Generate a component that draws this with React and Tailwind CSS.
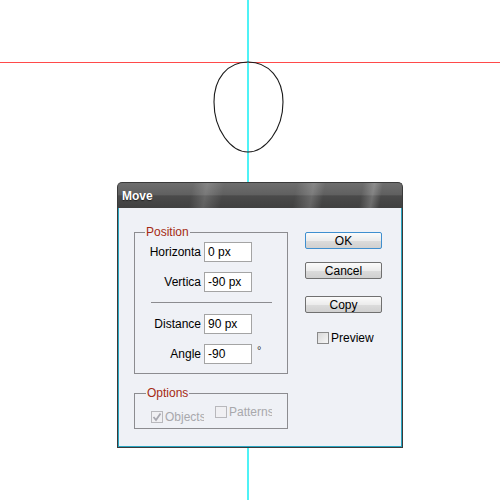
import React from 'react';

const font = "font-['Liberation_Sans',Arial,sans-serif]";

const Field = ({ label, value, unit }) => (
    <div className="flex items-center h-[20px]">
        <span className="w-[66px] text-right text-[12px] text-black leading-none">{label}</span>
        <div className="ml-[3px] w-[48px] h-[20px] border border-[#a4a4a4] bg-white flex items-center pl-[3px] text-[12px] text-black leading-none">
            {value}
        </div>
        {unit && <span className="ml-[5px] -mt-[8px] text-[11px] text-[#333]">{unit}</span>}
    </div>
);

const Button = ({ children, active }) => (
    <div
        className={`w-[77px] h-[17px] rounded-[2px] border flex items-center justify-center text-[12px] text-black leading-none bg-[linear-gradient(180deg,#fbfbfb_0%,#ececec_50%,#dcdcdc_51%,#d0d0d0_100%)] ${
            active ? 'border-[#3f8fcf]' : 'border-[#707070]'
        }`}
    >
        {children}
    </div>
);

const Check = ({ checked, disabled, label, width }) => (
    <div className={`flex items-center overflow-hidden whitespace-nowrap ${width}`}>
        <div
            className={`w-[12px] h-[12px] shrink-0 border flex items-center justify-center ${
                disabled ? 'border-[#b8b8bc] bg-[#f0f0f3]' : 'border-[#8a8a8a] bg-[linear-gradient(135deg,#d8d8d8,#f6f6f6)]'
            }`}
        >
            {checked && (
                <svg width="10" height="10" viewBox="0 0 10 10">
                    <polyline points="1.5,5 4,8 8.5,1.5" fill="none" stroke="#a8a8b0" strokeWidth="1.8" />
                </svg>
            )}
        </div>
        <span className={`ml-[2px] text-[12px] leading-none ${disabled ? 'text-[#a8a8ac]' : 'text-black'}`}>{label}</span>
    </div>
);

const App = () => {
    return (
        <div className={`relative w-[500px] h-[500px] bg-white overflow-hidden ${font}`}>
            {/* guides */}
            <div className="absolute left-0 top-[62px] w-[500px] h-[1px] bg-[#ff4a4a]" />
            <div className="absolute left-[247px] top-0 w-[2px] h-[500px] bg-[#4ff2f6]" />

            {/* egg path */}
            <svg className="absolute left-0 top-0" width="500" height="500">
                <path
                    d="M248,62 C269,62 283,79 283,102 C283,130 265,152 248,152 C231,152 214,130 214,102 C214,79 227,62 248,62 Z"
                    fill="none"
                    stroke="#1a1a1a"
                    strokeWidth="1.1"
                />
            </svg>

            {/* dialog window */}
            <div className="absolute left-[117px] top-[182px] w-[286px] h-[266px] flex flex-col">
                <div className="h-[26px] rounded-t-[5px] border border-[#3a3a3a] border-b-0 flex items-center pl-[4px] bg-[linear-gradient(100deg,transparent_26%,rgba(255,255,255,0.16)_31%,transparent_37%,transparent_62%,rgba(255,255,255,0.18)_68%,transparent_72%,transparent_85%,rgba(255,255,255,0.22)_89%,transparent_92%),linear-gradient(180deg,#6e6e6e_0%,#606060_46%,#4a4a4a_52%,#404040_100%)]">
                    <span className="text-[12px] font-bold text-white leading-none [text-shadow:0_1px_1px_#222]">Move</span>
                </div>
                <div className="flex-1 border border-t-0 border-[#3a3a3a]">
                    <div className="h-full border border-t-0 border-[#2aa6c2] bg-[#eff1f6] flex pl-[15px] pt-[24px]">
                        <div className="w-[154px] flex flex-col">
                            <div className="relative h-[142px] border border-[#8c8c90] pt-[9px]">
                                <span className="absolute left-[10px] -top-[8px] px-[1px] bg-[#eff1f6] text-[12px] leading-[14px] text-[#a52a14]">
                                    Position
                                </span>
                                <div className="flex flex-col gap-[10px]">
                                    <Field label="Horizonta" value="0 px" />
                                    <Field label="Vertica" value="-90 px" />
                                </div>
                                <div className="ml-[16px] mt-[10px] w-[121px] h-[1px] bg-[#8c8c90]" />
                                <div className="mt-[11px] flex flex-col gap-[10px]">
                                    <Field label="Distance" value="90 px" />
                                    <Field label="Angle" value="-90" unit="°" />
                                </div>
                            </div>
                            <div className="relative mt-[19px] h-[36px] border border-[#8c8c90] pt-[12px] pl-[16px] flex">
                                <span className="absolute left-[11px] -top-[8px] px-[1px] bg-[#eff1f6] text-[12px] leading-[14px] text-[#a52a14]">
                                    Options
                                </span>
                                <Check checked disabled label="Objects" width="w-[53px]" />
                                <div className="ml-[11px]">
                                    <Check disabled label="Patterns" width="w-[57px]" />
                                </div>
                            </div>
                        </div>
                        <div className="ml-[17px] w-[77px] flex flex-col">
                            <Button active>OK</Button>
                            <div className="mt-[13px]">
                                <Button>Cancel</Button>
                            </div>
                            <div className="mt-[17px]">
                                <Button>Copy</Button>
                            </div>
                            <div className="mt-[19px] ml-[12px]">
                                <Check label="Preview" width="w-[60px]" />
                            </div>
                        </div>
                    </div>
                </div>
            </div>
        </div>
    );
};

export default App;
